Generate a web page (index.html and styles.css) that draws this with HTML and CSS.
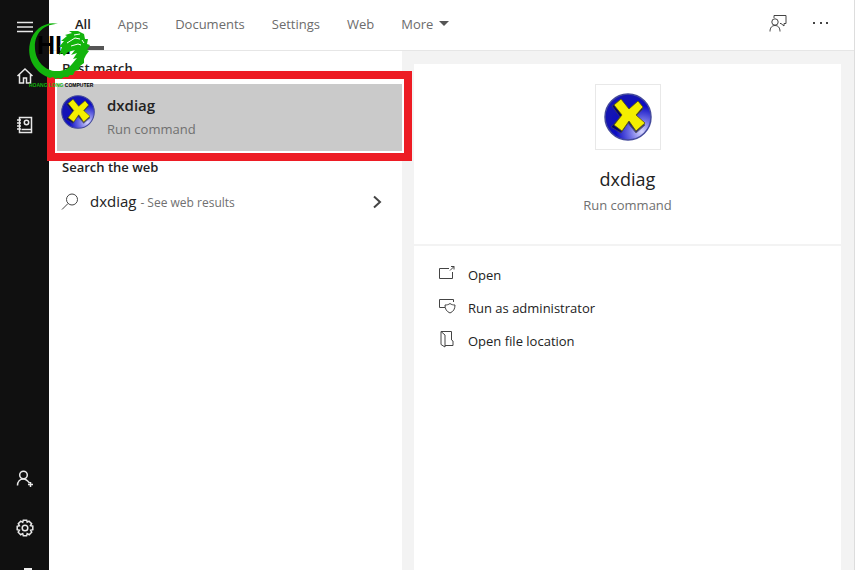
FILE: index.html
```
<!DOCTYPE html>
<html lang="en">
<head>
    <meta charset="UTF-8">
    <meta name="viewport" content="width=device-width, initial-scale=1.0">
    <title>Search - dxdiag</title>
    <link rel="stylesheet" href="styles.css">
</head>
<body>

    <!-- shared DirectX icon -->
    <svg class="defs" width="0" height="0" aria-hidden="true">
        <defs>
            <radialGradient id="ball" cx="80%" cy="82%" r="75%">
                <stop offset="0" stop-color="#d8d8ff"/>
                <stop offset="0.35" stop-color="#7070e4"/>
                <stop offset="0.75" stop-color="#0c0cc4"/>
                <stop offset="1" stop-color="#1414b4"/>
            </radialGradient>
            <symbol id="dx" viewBox="0 0 48 48">
                <circle cx="24" cy="24" r="23" fill="url(#ball)" stroke="#444a9c" stroke-width="1.5"/>
                <path d="M9 12L17 6L25 16L34 8L40 15L32 23L42 31L33 39L25 29L18 39L8 33L17 23Z" fill="#000048" opacity="0.7" transform="translate(-1 1)"/>
                <path d="M10 12L17 6L25 16L34 8L39 14L32 22L41 30L32 38L25 28L18 38L10 32L18 22Z" fill="#f4ee00" stroke="#55530a" stroke-width="0.8" stroke-linejoin="round"/>
            </symbol>
        </defs>
    </svg>

    <aside class="sidebar">
        <button class="side-btn" aria-label="Menu">
            <svg width="18" height="18" viewBox="0 0 18 18"><path d="M1 4.5h16M1 9h16M1 13.5h16"/></svg>
        </button>
        <button class="side-btn" aria-label="Home">
            <svg width="18" height="18" viewBox="0 0 18 18"><path d="M1.500 9L9 2l7.500 7M3.500 7.500V16h4v-5h3v5h4V7.500"/></svg>
        </button>
        <button class="side-btn" aria-label="Notebook">
            <svg width="18" height="18" viewBox="0 0 18 18"><path d="M3.500 1.500h12v15h-12zM1 4h4M1 7h4M1 10h4M1 13h4M5.500 13.500h10"/><circle cx="10.500" cy="6.500" r="2.200"/></svg>
        </button>
        <span class="spacer"></span>
        <button class="side-btn" aria-label="Account">
            <svg width="18" height="18" viewBox="0 0 18 18"><circle cx="7.500" cy="5" r="3.800"/><path d="M1.500 15.500c0-4 2.500-6.500 6-6.500 2.500 0 4 1.500 6 4M14.500 12v5M12 14.500h5"/></svg>
        </button>
        <button class="side-btn" aria-label="Settings">
            <svg width="18" height="18" viewBox="0 0 18 18"><path d="M7.300 1.200h3.400l.5 2 1.800-1 2.600 2.500-1.100 1.900 2.300.6v3.500l-2.200.6 1.100 1.900-2.500 2.500-2-1.100-.6 2.200H7.300l-.6-2.200-2 1.100-2.500-2.500 1.200-2-2.200-.5V7.300l2.200-.6-1.100-2 2.500-2.500 1.900 1.100z"/><circle cx="9" cy="9" r="2.800"/></svg>
        </button>
        <span class="side-cut"></span>
    </aside>

    <div class="main">
        <header class="topbar">
            <nav class="tabs">
                <a class="tab active" href="#all">All</a>
                <a class="tab" href="#apps">Apps</a>
                <a class="tab" href="#documents">Documents</a>
                <a class="tab" href="#settings">Settings</a>
                <a class="tab" href="#web">Web</a>
                <a class="tab more" href="#more">More <svg width="10" height="5" viewBox="0 0 10 5"><path d="M0 0h10L5 5z"/></svg></a>
            </nav>
            <div class="tools">
                <button class="tool" aria-label="Feedback">
                    <svg width="18" height="18" viewBox="0 0 18 18"><path d="M5 4V1.500h12v8h-2v2.500l-3-2.500h-1"/><circle cx="6" cy="8" r="3.200"/><path d="M1 17.500c0-4 2-6 5-6s5 2 5 6"/></svg>
                </button>
                <button class="tool" aria-label="Options">
                    <svg width="18" height="18" viewBox="0 0 18 18"><path class="dots" d="M1 8h2v2H1zM8 8h2v2H8zM14 8h2v2h-2z"/></svg>
                </button>
            </div>
        </header>

        <div class="content">
            <section class="results">
                <h2 class="group-title">Best match</h2>
                <div class="best">
                    <button class="best-btn">
                        <svg class="best-icon" width="34" height="34"><use href="#dx"/></svg>
                        <span class="best-text">
                            <strong>dxdiag</strong>
                            <small>Run command</small>
                        </span>
                    </button>
                </div>
                <h2 class="group-title">Search the web</h2>
                <button class="web-btn">
                    <svg width="18" height="18" viewBox="0 0 18 18"><circle cx="11" cy="6.500" r="5.500"/><path d="M7 10.500L1 16.500"/></svg>
                    <span class="web-text">dxdiag <small>- See web results</small></span>
                    <svg class="chevron" width="10" height="14" viewBox="0 0 10 14"><path d="M2 1.500L8 7l-6 5.500"/></svg>
                </button>
            </section>

            <section class="details">
                <div class="card app">
                    <div class="app-icon"><svg width="48" height="48"><use href="#dx"/></svg></div>
                    <h1>dxdiag</h1>
                    <p>Run command</p>
                </div>
                <div class="card actions">
                    <button class="action">
                        <svg width="18" height="18" viewBox="0 0 18 18"><path d="M11 4.500H1.500v10h13V8M12 6.500l4-4M13 2.500h3v3"/></svg>
                        Open
                    </button>
                    <button class="action">
                        <svg width="18" height="18" viewBox="0 0 18 18"><path d="M7 10.500H1.500v-8h14V5M12 6.500c1.500 1.200 3 1.500 5 1.500 0 4-1.500 6.500-5 8-3.500-1.500-5-4-5-8 2 0 3.500-.3 5-1.500z"/></svg>
                        Run as administrator
                    </button>
                    <button class="action">
                        <svg width="18" height="18" viewBox="0 0 18 18"><path d="M3 1.500h10.500v8.500l1.500 1v4.500H7M3 1.500v13l4 2.500V5z"/></svg>
                        Open file location
                    </button>
                </div>
            </section>
        </div>
    </div>

    <!-- watermark -->
    <div class="logo">
        <svg width="64" height="60" viewBox="0 0 64 60">
            <text class="logo-letters" x="8" y="33">HL</text>
            <path class="dragon" d="M29 3C17 0 4 8 1 22c-4 17 7 31 20 35l3-1 2 2 3-1 3 1 3-2 4 0 2-2 3 0 2-4 4-1 1-4 4-3 0-4 2-4 3-4-2-1 3-5-3-1 1-5-3 0-1-5-6-3-9 0 3 2-7 2 2 1-6 5 3 0-5 6 3 0-3 8 3-2 2 3 4-4 7-2-4 5 6-2-4 6 4-1-5 6c-4 5-8 7-14 7C17 51 7 41 6 28 5 13 14 3 29 3z"/>
            <path class="dragon-lines" d="M38 22l8-5 5 1M45 14l6-1M42 25l7-2 3 1M53 19l2 3"/>
        </svg>
        <div class="logo-name"><span>HOANG LONG</span> COMPUTER</div>
    </div>

</body>
</html>
```
FILE: styles.css
```
* {
    box-sizing: border-box;
}

body {
    margin: 0;
    display: flex;
    height: 100vh;
    overflow: hidden;
    font-family: "Open Sans", "Noto Sans", sans-serif;
    font-size: 13px;
    line-height: 18px;
    color: #222;
    background-color: #fff;
}

button {
    border: 0;
    padding: 0;
    background: none;
    font: inherit;
    color: inherit;
    text-align: left;
    cursor: pointer;
}

svg {
    display: block;
    flex: none;
    fill: none;
    stroke: #444;
    stroke-width: 1;
}

small {
    font-size: 13px;
    color: #707070;
}

.defs {
    position: absolute;
}

/* left black bar */
.sidebar {
    display: flex;
    flex-direction: column;
    flex: none;
    width: 49px;
    padding-top: 2px;
    background-color: #101010;
}

.side-btn {
    display: flex;
    align-items: center;
    justify-content: center;
    height: 49px;
}

.side-btn svg {
    stroke: #e8e8e8;
    stroke-width: 1.5;
}

.spacer {
    flex: 1;
}

.side-cut {
    width: 8px;
    height: 2px;
    margin: 16px 0 0 24px;
    background-color: #eee;
}

.main {
    display: flex;
    flex-direction: column;
    flex: 1;
    min-width: 0;
    border-right: 1px solid #ddd;
}

/* tabs */
.topbar {
    display: flex;
    justify-content: space-between;
    height: 51px;
    padding: 0 24px 0 13px;
    border-bottom: 1px solid #e6e6e6;
}

.tabs {
    display: flex;
    gap: 1px;
}

.tab {
    display: flex;
    align-items: center;
    padding: 1px 13px 0;
    border-bottom: 4px solid transparent;
    color: #6c6c6c;
    text-decoration: none;
}

.tab.active {
    border-bottom-color: #555;
    color: #222;
    font-weight: 600;
}

.more {
    gap: 6px;
}

.more svg {
    fill: #555;
    stroke: none;
}

.tools {
    display: flex;
    align-items: center;
    gap: 25px;
    padding-bottom: 4px;
}

.dots {
    fill: #444;
    stroke: none;
}

.content {
    display: grid;
    grid-template-columns: minmax(0, 353fr) minmax(0, 452fr);
    flex: 1;
    min-height: 0;
}

/* results */
.results {
    padding-top: 8px;
}

.group-title {
    margin: 0 0 0 13px;
    font-size: 13px;
    line-height: 18px;
    font-weight: 600;
}

.best {
    position: relative;
    padding: 7px 0 7px 7px;
}

/* red frame over the row */
.best::after {
    content: '';
    position: absolute;
    top: -6px;
    right: -10px;
    bottom: -3px;
    left: -2px;
    border: 8px solid #ed1c24;
    box-shadow: inset 0 0 0 2px #fff;
    pointer-events: none;
}

.best-btn {
    display: flex;
    gap: 12px;
    width: 100%;
    height: 67px;
    padding: 11px 5px;
    background-color: #cacaca;
}

.best-text {
    display: flex;
    flex-direction: column;
    gap: 5px;
}

.best-text strong {
    font-size: 15px;
    line-height: 20px;
    font-weight: 600;
}

.web-btn {
    display: flex;
    align-items: center;
    width: 100%;
    margin-top: 5px;
    padding: 10px 20px 10px 12px;
}

.web-text {
    flex: 1;
    padding-left: 11px;
    font-size: 15px;
    line-height: 20px;
}

.web-text small {
    font-size: 12px;
}

.chevron {
    stroke-width: 2;
}

/* right pane */
.details {
    display: flex;
    flex-direction: column;
    gap: 2px;
    padding: 13px 13px 0 12px;
    background-color: #f3f3f3;
}

.card {
    background-color: #fff;
}

.app {
    display: flex;
    flex-direction: column;
    align-items: center;
    height: 180px;
    padding-top: 20px;
}

.app-icon {
    padding: 8px;
    border: 1px solid #e8e8e8;
}

.app h1 {
    margin: 17px 0 5px;
    font-size: 18px;
    line-height: 24px;
    font-weight: 400;
}

.app p {
    margin: 0;
    color: #707070;
}

.actions {
    display: flex;
    flex-direction: column;
    flex: 1;
    padding: 12px 24px;
}

.action {
    display: flex;
    align-items: center;
    gap: 12px;
    height: 33px;
}

.action svg {
    margin-bottom: 4px;
}

/* watermark */
.logo {
    position: absolute;
    top: 21px;
    left: 29px;
}

.logo svg {
    stroke: none;
}

.logo-letters {
    font-family: "Liberation Sans", sans-serif;
    font-size: 25px;
    font-weight: 700;
    fill: #000;
}

.dragon {
    fill: #13b40d;
}

.dragon-lines {
    stroke: #fff;
    stroke-width: 1;
}

.logo-name {
    font-family: "Liberation Sans", sans-serif;
    font-size: 5px;
    line-height: 8px;
    font-weight: 700;
    white-space: nowrap;
    color: #000;
}

.logo-name span {
    color: #13b40d;
}
```
